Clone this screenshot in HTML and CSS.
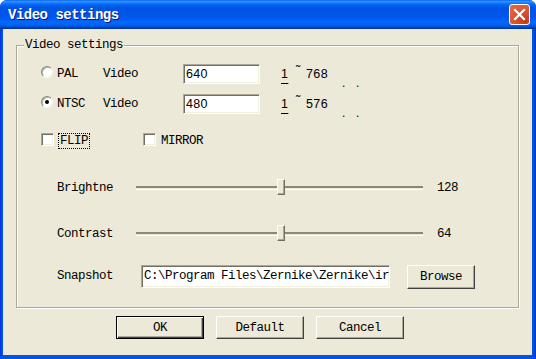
FILE: index.html
```html
<!DOCTYPE html>
<html>
<head>
<meta charset="utf-8">
<link rel="stylesheet" href="styles.css">
</head>
<body>
<div class="window">
  <div class="titlebar">
    <span class="title">Video settings</span>
    <div class="close">
      <svg width="21" height="21" viewBox="0 0 21 21"><path d="M6 6 L15 15 M15 6 L6 15" stroke="#fff" stroke-width="2.2" stroke-linecap="square"/></svg>
    </div>
  </div>
  <div class="client">
    <div class="group">
      <span class="group-label">Video settings</span>
      <div class="res-row first">
        <span class="radio"></span>
        <span class="lbl std">PAL</span>
        <span class="lbl vid">Video</span>
        <div class="edit num">640</div>
        <span class="one">1</span>
        <span class="tilde">˜</span>
        <span class="max">768</span>
        <span class="dots">.</span>
        <span class="dots">.</span>
      </div>
      <div class="res-row second">
        <span class="radio checked"></span>
        <span class="lbl std">NTSC</span>
        <span class="lbl vid">Video</span>
        <div class="edit num">480</div>
        <span class="one">1</span>
        <span class="tilde">˜</span>
        <span class="max">576</span>
        <span class="dots">.</span>
        <span class="dots">.</span>
      </div>
      <div class="check-row">
        <span class="check"></span>
        <span class="lbl focus">FLIP</span>
        <span class="check second-check"></span>
        <span class="lbl">MIRROR</span>
      </div>
      <div class="slider-row bright">
        <span class="lbl slabel">Brightne</span>
        <div class="track"><span class="channel"></span><span class="thumb"></span></div>
        <span class="lbl value">128</span>
      </div>
      <div class="slider-row contrast">
        <span class="lbl slabel">Contrast</span>
        <div class="track"><span class="channel"></span><span class="thumb"></span></div>
        <span class="lbl value">64</span>
      </div>
      <div class="snap-row">
        <span class="lbl snlabel">Snapshot</span>
        <div class="edit path">C:\Program Files\Zernike\Zernike\ir</div>
        <div class="btn browse">Browse</div>
      </div>
    </div>
    <div class="buttons">
      <div class="btn default-btn">OK</div>
      <div class="btn">Default</div>
      <div class="btn">Cancel</div>
    </div>
  </div>
</div>
</body>
</html>
```

FILE: styles.css
```css
html, body {
  margin: 0;
  padding: 0;
  background: #ffffff;
}
.window {
  width: 536px;
  height: 359px;
  display: flex;
  flex-direction: column;
  background: linear-gradient(to right, #0831d9 0, #0054e3 2px, #0054e3 533px, #0831d9 536px);
  border-radius: 7px 7px 0 0;
  overflow: hidden;
}
.titlebar {
  height: 29px;
  flex: none;
  display: flex;
  align-items: center;
  padding-left: 8px;
  padding-right: 6px;
  background: linear-gradient(to bottom, #0058ee 0%, #3593ff 4%, #288eff 7%, #127dff 10%, #036ffc 14%, #0262ee 18%, #0057e5 24%, #0054e3 30%, #0055eb 56%, #005bf5 66%, #026afe 76%, #0062ef 86%, #0052d6 92%, #0040ab 96%, #003092 100%);
}
.title {
  flex: 1;
  color: #fff;
  font-family: "Liberation Mono", monospace;
  font-weight: bold;
  font-size: 14px;
  letter-spacing: -0.5px;
  text-shadow: 1px 1px 0 #0a1883;
  margin-top: 1px;
}
.close {
  width: 21px;
  height: 21px;
  box-sizing: border-box;
  border: 1px solid #fff;
  border-radius: 3px;
  background: radial-gradient(circle at 80% 85%, #c23a17 0%, #d8502c 40%, #e56b47 100%);
  display: flex;
}
.close svg {
  margin: -1px;
}
.client {
  flex: 1;
  margin: 0 4px 4px 3px;
  background: #ece9d8;
  display: flex;
  flex-direction: column;
  font-family: "Liberation Mono", monospace;
  font-size: 12.5px;
  letter-spacing: -0.5px;
  color: #000;
}
.group {
  position: relative;
  box-sizing: border-box;
  width: 503px;
  height: 263px;
  margin: 16px 0 0 13px;
  border: 1px solid #aca899;
  box-shadow: 1px 1px 0 #fff, inset 1px 1px 0 #fff;
  display: flex;
  flex-direction: column;
}
.group-label {
  position: absolute;
  left: 7px;
  top: -9px;
  line-height: 16px;
  padding: 0 1px;
  background: #ece9d8;
}
.lbl {
  line-height: 16px;
  white-space: nowrap;
}
.res-row {
  display: flex;
  align-items: flex-start;
  height: 20px;
  padding-left: 24px;
}
.res-row.first { margin-top: 18px; }
.res-row.second { margin-top: 10px; }
.radio {
  box-sizing: border-box;
  width: 12px;
  height: 12px;
  margin-top: 2px;
  border-radius: 50%;
  background: #fff;
  border: 1px solid;
  border-color: #8a8778 #f4f3ee #f4f3ee #8a8778;
  box-shadow: inset 1px 1px 0 #b8b5a6;
  display: flex;
  align-items: center;
  justify-content: center;
}
.radio.checked::after {
  content: "";
  width: 4px;
  height: 4px;
  border-radius: 50%;
  background: #000;
}
.std {
  width: 46px;
  margin-left: 4px;
  margin-top: 2px;
}
.vid {
  width: 80px;
  margin-top: 2px;
}
.edit {
  box-sizing: border-box;
  background: #fff;
  border: 1px solid;
  border-color: #aca899 #fff #fff #aca899;
  box-shadow: inset 1px 1px 0 #716f64, inset -1px -1px 0 #f1efe2;
  overflow: hidden;
  white-space: nowrap;
}
.num {
  width: 77px;
  height: 20px;
  font-family: "Liberation Sans", Arial, sans-serif;
  font-size: 12.5px;
  letter-spacing: 0.3px;
  line-height: 18px;
  padding-left: 2px;
}
.one, .tilde, .max {
  font-family: "Liberation Sans", Arial, sans-serif;
  font-size: 12.5px;
  letter-spacing: 0.4px;
  line-height: 20px;
}
.one {
  margin-left: 21px;
  width: 6px;
  text-decoration: underline;
  text-underline-offset: 5px;
}
.tilde {
  margin-left: 9px;
  width: 10px;
  font-size: 13px;
  line-height: 14px;
}
.max {
  width: 36px;
}
.dots {
  font-family: "Liberation Sans", Arial, sans-serif;
  font-size: 12px;
  line-height: 12px;
  margin-top: 13px;
  width: 14px;
}
.check-row {
  display: flex;
  align-items: flex-start;
  margin-top: 19px;
  padding-left: 24px;
  height: 16px;
}
.check {
  box-sizing: border-box;
  width: 13px;
  height: 13px;
  background: #fff;
  border: 1px solid;
  border-color: #aca899 #fff #fff #aca899;
  box-shadow: inset 1px 1px 0 #716f64, inset -1px -1px 0 #f1efe2;
}
.focus {
  margin-left: 4px;
  border: 1px dotted #000;
  padding: 0 1px;
  line-height: 14px;
}
.second-check {
  margin-left: 53px;
}
.check-row .lbl:last-child {
  margin-left: 5px;
  line-height: 16px;
}
.slider-row {
  display: flex;
  align-items: center;
  height: 16px;
  padding-left: 40px;
}
.slider-row.bright { margin-top: 30px; }
.slider-row.contrast { margin-top: 30px; }
.slabel {
  width: 79px;
  margin-top: 2px;
}
.track {
  position: relative;
  width: 287px;
  height: 16px;
  display: flex;
  align-items: center;
}
.channel {
  box-sizing: border-box;
  width: 100%;
  height: 4px;
  border-top: 2px solid #8a887b;
  border-bottom: 1px solid #fff;
  margin-top: 1px;
}
.thumb {
  position: absolute;
  left: 141px;
  top: 0;
  box-sizing: border-box;
  width: 8px;
  height: 16px;
  background: #ece9d8;
  border: 1px solid;
  border-color: #fff #716f64 #716f64 #fff;
  box-shadow: inset -1px -1px 0 #aca899;
}
.value {
  margin-left: 14px;
  margin-top: 2px;
}
.snap-row {
  display: flex;
  align-items: flex-start;
  margin-top: 24px;
  padding-left: 40px;
}
.snlabel {
  width: 84px;
  line-height: 23px;
}
.path {
  width: 249px;
  height: 23px;
  line-height: 21px;
  padding-left: 2px;
}
.btn {
  box-sizing: border-box;
  display: flex;
  align-items: center;
  justify-content: center;
  background: #ece9d8;
  border: 1px solid;
  border-color: #fff #404040 #404040 #fff;
  box-shadow: inset -1px -1px 0 #aca899;
  width: 88px;
  height: 23px;
}
.browse {
  width: 68px;
  height: 24px;
  margin-left: 17px;
}
.buttons {
  display: flex;
  gap: 12px;
  margin: 8px 0 0 113px;
}
.default-btn {
  border: 1px solid #000;
  box-shadow: inset 1px 1px 0 #fff, inset -1px -1px 0 #404040, inset -2px -2px 0 #aca899;
}
```
